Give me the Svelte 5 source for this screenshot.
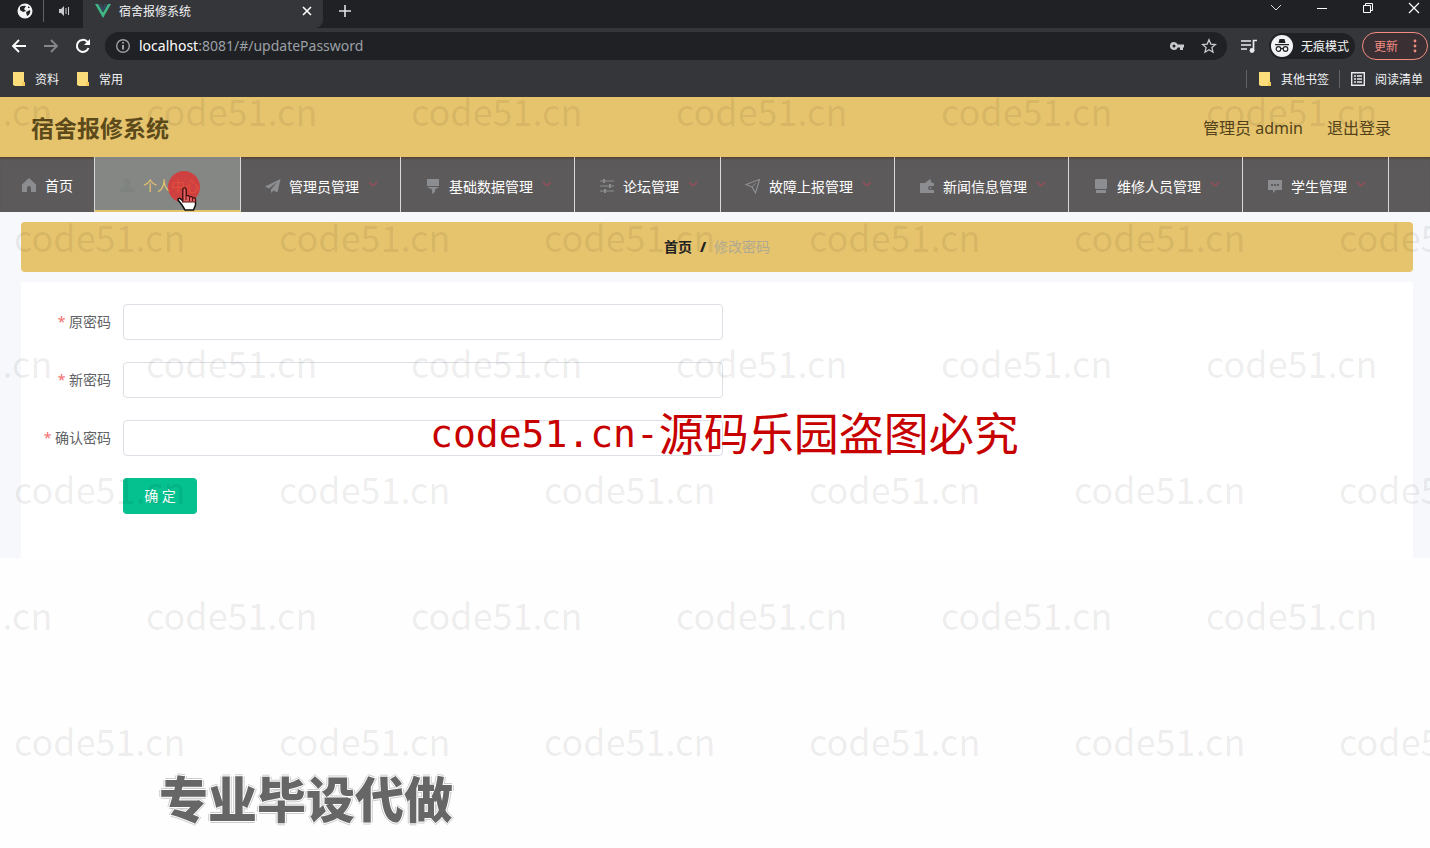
<script>
  let fields = $state([
    { id: 'password', label: '原密码', value: '' },
    { id: 'newpassword', label: '新密码', value: '' },
    { id: 'repassword', label: '确认密码', value: '' }
  ]);

  const menus = [
    { name: '个人中心', icon: 'user', active: true },
    { name: '管理员管理', icon: 'plane' },
    { name: '基础数据管理', icon: 'brush' },
    { name: '论坛管理', icon: 'sliders' },
    { name: '故障上报管理', icon: 'send' },
    { name: '新闻信息管理', icon: 'wallet' },
    { name: '维修人员管理', icon: 'printer' },
    { name: '学生管理', icon: 'chat' }
  ];

  const stampRows = [0, 1, 2, 3, 4, 5];
  const stampCols = [0, 1, 2, 3, 4, 5];

  function updatePassword(e) {
    e.preventDefault();
    console.log('update password');
  }
</script>

{#snippet folder()}
  <svg width="12" height="14" viewBox="0 0 12 14"><path d="M0 0h11v10h1v4H2l-2-1z" fill="#fbdc7b" /><path d="M9 10h3v4H9z" fill="#f3cb5c" /></svg>
{/snippet}

{#snippet menuIcon(name)}
  <svg class="menu-icon" width="16" height="16" viewBox="0 0 16 16" fill="currentColor">
    {#if name === 'home'}
      <path d="M8 1 1 7.500V15h5v-4a2 2 0 0 1 4 0v4h5V7.500z" />
    {:else if name === 'user'}
      <circle cx="8" cy="5" r="3.500" /><path d="M1 15c0-4 3-6 7-6s7 2 7 6z" />
    {:else if name === 'plane'}
      <path d="M15.500 1 0 8.500l4 2L12 4l-6 7.500V15l2.500-2.500 4 2z" />
    {:else if name === 'brush'}
      <path d="M2 1h12v7H2zM2 9h12l-4 2.500V14l-3 2v-4.500z" />
    {:else if name === 'sliders'}
      <path d="M1 2.500h14v1H1zM1 7.500h14v1H1zM1 12.500h14v1H1z" /><path d="M4 1h2v4H4zM10 6h2v4h-2zM5 11h2v4H5z" />
    {:else if name === 'send'}
      <path d="M14.500 1.500 1 6.500l6 2.500 3.500 6z" fill="none" stroke="currentColor" stroke-width="1.200" /><path d="m7 9 4-4" stroke="currentColor" />
    {:else if name === 'wallet'}
      <path d="M1 5h5l5-4 2 4h2v3h-4a2 2 0 0 0 0 4h4v3H1z" /><circle cx="11.500" cy="10" r="1" />
    {:else if name === 'printer'}
      <path d="M3 1h10q1 0 1 1v8q0 1-1 1H3q-1 0-1-1V2q0-1 1-1zM3 12h10v3H3z" />
    {:else if name === 'chat'}
      <path fill-rule="evenodd" d="M1 2h14v10H9l-3 3v-3H1zM4 6v2h2V6zm3 0v2h2V6zm3 0v2h2V6z" />
    {/if}
  </svg>
{/snippet}

<div class="browser">
  <div class="tabs">
    <button class="pinned" aria-label="pinned tab">
      <svg width="16" height="16" viewBox="0 0 16 16"><circle cx="8" cy="8" r="7.500" fill="#f1f3f4" /><path d="M3 4q3-2 6-1L7 6l2 2-3 1-3-2zM9 9l4-2q1 4-3 6zM11 3l2 2h-2z" fill="#202124" /></svg>
    </button>
    <button class="sound" aria-label="mute">
      <svg width="12" height="12" viewBox="0 0 12 12"><path d="M1 4h2l3-3v10L3 8H1z" fill="#c8cacd" /><path d="M8 3v6M10.500 2v8" stroke="#c8cacd" /></svg>
    </button>
    <div class="tab">
      <svg width="16" height="14" viewBox="0 0 16 14"><path d="M0 0h3l5 8.500L13 0h3L8 14z" fill="#41b883" /><path d="M3 0h3l2 3.500L10 0h3L8 8.500z" fill="#35495e" /></svg>
      <span>宿舍报修系统</span>
      <button aria-label="close tab">
        <svg width="10" height="10" viewBox="0 0 10 10"><path d="m1 1 8 8M9 1 1 9" stroke="#fff" stroke-width="1.600" /></svg>
      </button>
    </div>
    <button class="new-tab" aria-label="new tab">
      <svg width="12" height="12" viewBox="0 0 12 12"><path d="M6 0v12M0 6h12" stroke="#dfe1e5" stroke-width="1.600" /></svg>
    </button>
    <div class="window-buttons">
      <button aria-label="search tabs"><svg width="12" height="12" viewBox="0 0 12 12"><path d="m1 3 5 5 5-5" fill="none" stroke="#ddd" /></svg></button>
      <button aria-label="minimize"><svg width="12" height="12" viewBox="0 0 12 12"><path d="M1 6.500h10" stroke="#fff" /></svg></button>
      <button aria-label="restore"><svg width="12" height="12" viewBox="0 0 12 12"><path d="M1.500 3.500h7v7h-7zM3.500 3V1.500h7v7H9" fill="none" stroke="#fff" /></svg></button>
      <button aria-label="close"><svg width="12" height="12" viewBox="0 0 12 12"><path d="m1 1 10 10M11 1 1 11" stroke="#fff" stroke-width="1.200" /></svg></button>
    </div>
  </div>

  <div class="toolbar">
    <button aria-label="back"><svg width="16" height="16" viewBox="0 0 16 16"><path d="M8 2 2 8l6 6M2 8h13" fill="none" stroke="#fff" stroke-width="1.800" /></svg></button>
    <button aria-label="forward"><svg width="16" height="16" viewBox="0 0 16 16"><path d="m8 2 6 6-6 6M14 8H1" fill="none" stroke="#85878a" stroke-width="1.800" /></svg></button>
    <button aria-label="reload"><svg width="16" height="16" viewBox="0 0 16 16"><path d="M13.500 10A6 6 0 1 1 12 3.500L14 5.500" fill="none" stroke="#fff" stroke-width="2" /><path d="M15 1v6H9z" fill="#fff" /></svg></button>
    <div class="address">
      <svg width="16" height="16" viewBox="0 0 16 16"><circle cx="8" cy="8" r="6.300" fill="none" stroke="#9aa0a6" stroke-width="1.400" /><path d="M8 7v4.500M8 4v1.600" stroke="#bdc1c6" stroke-width="1.600" /></svg>
      <span class="url"><b>localhost</b>:8081/#/updatePassword</span>
      <button aria-label="saved passwords"><svg width="16" height="16" viewBox="0 0 16 16"><path fill-rule="evenodd" d="M5 4a4 4 0 1 0 3.700 5.500H11V12h3V9.500h1v-3H8.700A4 4 0 0 0 5 4zm0 2.500a1.500 1.500 0 1 1 0 3 1.500 1.500 0 0 1 0-3z" fill="#c8cacd" /></svg></button>
      <button aria-label="bookmark"><svg width="16" height="16" viewBox="0 0 16 16"><path d="m8 1.800 1.800 4.300 4.700.4-3.600 3.100 1.100 4.600L8 11.700l-4 2.500 1.100-4.600L1.500 6.500l4.700-.4z" fill="none" stroke="#c8cacd" stroke-width="1.300" /></svg></button>
    </div>
    <button class="media" aria-label="media"><svg width="16" height="16" viewBox="0 0 16 16"><path d="M0 3h10M0 7h10M0 11h6M12.500 13V2.500H16" fill="none" stroke="#e8eaed" stroke-width="1.700" /><circle cx="11" cy="12.500" r="2.400" fill="#e8eaed" /></svg></button>
    <div class="incognito">
      <svg width="22" height="22" viewBox="0 0 22 22"><circle cx="11" cy="11" r="11" fill="#f1f3f4" /><path d="m7.500 8 1-4h5l1 4zM4 9h14v1.200H4z" fill="#202124" /><g fill="none" stroke="#202124" stroke-width="1.200"><circle cx="7.500" cy="14" r="2.300" /><circle cx="14.500" cy="14" r="2.300" /><path d="M9.800 13.500h2.400" /></g></svg>
      <span>无痕模式</span>
    </div>
    <button class="update">更新 <svg width="4" height="16" viewBox="0 0 4 16" fill="#f28b82"><circle cx="2" cy="3" r="1.400" /><circle cx="2" cy="8" r="1.400" /><circle cx="2" cy="13" r="1.400" /></svg></button>
  </div>

  <div class="bookmarks">
    <a href="#/data">{@render folder()}资料</a>
    <a href="#/common">{@render folder()}常用</a>
    <a class="other" href="#/other">{@render folder()}其他书签</a>
    <a class="reading" href="#/reading"><svg width="14" height="14" viewBox="0 0 14 14"><path d="M.7.700h12.600v12.600H.7zM3 4h2M6 4h5M3 7h2M6 7h5M3 10h2M6 10h5" fill="none" stroke="#e8eaed" stroke-width="1.400" /></svg>阅读清单</a>
  </div>
</div>

<header>
  <h1>宿舍报修系统</h1>
  <span>管理员 admin</span>
  <a href="#/login">退出登录</a>
</header>

<nav>
  <a class="home" href="#/index">{@render menuIcon('home')}首页</a>
  {#each menus as menu}
    <button class:active={menu.active}>
      {@render menuIcon(menu.icon)}
      {menu.name}
      <svg class="arrow" width="12" height="12" viewBox="0 0 12 12"><path d="m2 2 4 4 4-4" fill="none" stroke="currentColor" stroke-width="1.200" /></svg>
      {#if menu.active}
        <span class="click-spot"></span>
        <svg class="pointer" width="20" height="24" viewBox="0 0 20 24">
          <path d="M6 14V3q0-2 1.500-2T9 3v6q3-1 3.500 1 2.500-1 3 1 3-1 3 2v5l-2 5H8l-3-5-4-5q0-2 2-1.500z" fill="#fff" stroke="#111" stroke-width="1.500" />
          <path d="M6 14V3q0-2 1.500-2T9 3v6q3-1 3.500 1 2.500-1 3 1 3-1 3 2v2H5z" fill="#e06262" stroke="#5c1010" />
          <path d="M9 9v4M12.500 10v4M15.500 11v3" stroke="#5c1010" />
        </svg>
      {/if}
    </button>
  {/each}
</nav>

<main>
  <div class="breadcrumb">
    <a href="#/index">首页</a>
    <b>/</b>
    <span>修改密码</span>
  </div>

  <form onsubmit={updatePassword}>
    {#each fields as field}
      <div class="form-item">
        <label for={field.id}><i>*</i> {field.label}</label>
        <input type="password" id={field.id} bind:value={field.value} />
      </div>
    {/each}
    <button type="submit">确 定</button>
  </form>
</main>

<footer>专业毕设代做</footer>

<div class="stamps" aria-hidden="true">
  {#each stampRows as row}
    <div class="stamp-row" class:shifted={row % 2 === 0}>
      {#each stampCols as col}
        <span>code51.cn</span>
      {/each}
    </div>
  {/each}
</div>
<div class="notice"><span>code51.cn-</span>源码乐园盗图必究</div>

<style>
  :global(body) {
    background: #fefefe;
    font-family: "Noto Sans", "Noto Sans CJK SC", sans-serif;
    font-size: 14px;
    overflow-x: hidden;
  }

  a {
    color: inherit;
    text-decoration: none;
  }

  button {
    padding: 0;
    border: 0;
    background: none;
    font: inherit;
    color: inherit;
    cursor: pointer;
  }

  svg {
    display: block;
    flex: none;
  }

  .browser {
    background: #35363a;
    color: #f1f3f4;
    font-size: 12px;
  }

  .tabs {
    display: flex;
    height: 28px;
    background: #202124;
  }

  .tabs button {
    display: flex;
    align-items: center;
    justify-content: center;
    height: 22px;
  }

  .pinned {
    width: 44px;
    padding-left: 6px;
    border-right: 1px solid #5f6368;
  }

  .sound {
    width: 39px;
  }

  .tab {
    display: flex;
    align-items: center;
    gap: 8px;
    box-sizing: border-box;
    width: 240px;
    height: 28px;
    padding: 0 11px 6px 12px;
    background: #35363a;
    border-radius: 0 0 8px 0;
  }

  .tab span {
    flex: 1;
  }

  .new-tab {
    width: 44px;
  }

  .window-buttons {
    display: flex;
    gap: 34px;
    margin-left: auto;
    padding-right: 10px;
  }

  .window-buttons button {
    height: 16px;
  }

  .toolbar {
    display: flex;
    align-items: center;
    gap: 16px;
    height: 36px;
    padding: 0 2px 0 11px;
  }

  .address {
    display: flex;
    align-items: center;
    flex: 1;
    gap: 16px;
    height: 28px;
    padding: 0 10px;
    margin: 0 -2px;
    border-radius: 14px;
    background: #202124;
  }

  .url {
    flex: 1;
    padding-bottom: 2px;
    margin-left: -8px;
    font-size: 14px;
    color: #9aa0a6;
  }

  .url b {
    font-weight: 400;
    color: #fff;
  }

  .incognito {
    display: flex;
    align-items: center;
    gap: 8px;
    height: 26px;
    padding: 0 6px 0 2px;
    margin-left: -4px;
    border-radius: 13px;
    background: #202124;
  }

  .update {
    display: flex;
    align-items: center;
    justify-content: space-between;
    box-sizing: border-box;
    width: 66px;
    height: 28px;
    padding: 0 10px 0 11px;
    margin-left: -9px;
    border: 1px solid #f28b82;
    border-radius: 14px;
    background: #3a3033;
    color: #f28b82;
  }

  .bookmarks {
    display: flex;
    align-items: center;
    gap: 18px;
    box-sizing: border-box;
    height: 33px;
    padding: 0 7px 4px 13px;
  }

  .bookmarks a {
    display: flex;
    align-items: center;
    gap: 10px;
  }

  .bookmarks .other {
    margin-left: auto;
    padding-left: 12px;
    border-left: 1px solid #5f6368;
  }

  .bookmarks .reading {
    padding-left: 11px;
    margin-left: -8px;
    border-left: 1px solid #5f6368;
  }

  header {
    display: flex;
    align-items: center;
    gap: 24px;
    box-sizing: border-box;
    height: 60px;
    padding: 0 39px 0 31px;
    background: #e6c46d;
    color: #54431a;
    font-size: 16px;
  }

  h1 {
    flex: 1;
    margin: 0;
    font-size: 23px;
    color: #5c4a1b;
  }

  nav {
    display: flex;
    height: 55px;
    background: #5d5a5b;
    box-shadow: inset 0 3px 3px -2px #4c3a22;
    color: #fff;
  }

  nav a,
  nav button {
    position: relative;
    display: flex;
    align-items: center;
    gap: 8px;
    box-sizing: border-box;
    height: 55px;
    padding: 2px 21px 0 24px;
    border-right: 1px solid #d8d8d8;
    white-space: nowrap;
  }

  nav .home {
    padding-top: 0;
    padding-left: 21px;
  }

  .menu-icon {
    color: #8b8d90;
  }

  .arrow {
    color: #a04b5a;
  }

  nav .active {
    background: #848783;
    border-bottom: 2px solid #e6c46d;
    color: #e6c46d;
  }

  .active .menu-icon {
    color: #7f8380;
  }

  .active .arrow {
    color: #848783;
  }

  .click-spot {
    position: absolute;
    left: 73px;
    top: 14px;
    width: 32px;
    height: 32px;
    border-radius: 50%;
    background: rgba(226, 48, 48, 0.8);
  }

  .pointer {
    position: absolute;
    left: 82px;
    top: 30px;
  }

  main {
    padding: 10px 17px 0 21px;
    background: #f7f8fb;
  }

  .breadcrumb {
    display: flex;
    align-items: center;
    justify-content: center;
    gap: 8px;
    box-sizing: border-box;
    height: 50px;
    padding-bottom: 2px;
    border-radius: 4px;
    background: #e6c46d;
    font-weight: 700;
    color: #222;
  }

  .breadcrumb span {
    font-weight: 400;
    color: #b0a992;
  }

  form {
    margin-top: 10px;
    padding: 22px 22px 44px;
    background: #fff;
  }

  .form-item {
    display: flex;
    margin-bottom: 22px;
  }

  label {
    box-sizing: border-box;
    width: 80px;
    padding-right: 12px;
    line-height: 36px;
    text-align: right;
    white-space: nowrap;
    color: #606266;
  }

  label i {
    font-style: normal;
    color: #f56c6c;
  }

  input {
    box-sizing: border-box;
    width: 600px;
    height: 36px;
    padding: 0 12px;
    border: 1px solid #dcdfe6;
    border-radius: 4px;
    background: #fff;
    font: inherit;
  }

  form button {
    display: block;
    width: 74px;
    height: 36px;
    padding-bottom: 2px;
    margin-left: 80px;
    border-radius: 4px;
    background: #04c18f;
    color: #fff;
  }

  footer {
    padding: 205px 159px 13px;
    font-size: 49px;
    font-weight: 900;
    line-height: 72px;
    color: #666;
    text-shadow: 1px 0 #fff, -1px 0 #fff, 0 1px #fff, 0 -1px #fff, 2px 0 #ccc, -2px 0 #ccc, 0 2px #ccc, 0 -2px #ccc;
  }

  .stamps {
    position: absolute;
    top: 47px;
    left: 0;
    width: 100%;
    overflow: hidden;
    pointer-events: none;
    font-family: "Noto Sans CJK SC", sans-serif;
    font-size: 36px;
    font-weight: 400;
    line-height: 126px;
    color: rgba(0, 0, 0, 0.08);
  }

  .stamp-row {
    display: flex;
    height: 126px;
    padding-left: 14px;
  }

  .stamp-row.shifted {
    margin-left: -133px;
  }

  .stamp-row span {
    flex: none;
    width: 265px;
  }

  .notice {
    position: absolute;
    top: 401px;
    left: 430px;
    display: flex;
    align-items: center;
    font-size: 45px;
    line-height: 66px;
    white-space: nowrap;
    color: #c70000;
    pointer-events: none;
  }

  .notice span {
    font-family: "DejaVu Sans Mono", monospace;
    font-size: 38px;
  }
</style>
